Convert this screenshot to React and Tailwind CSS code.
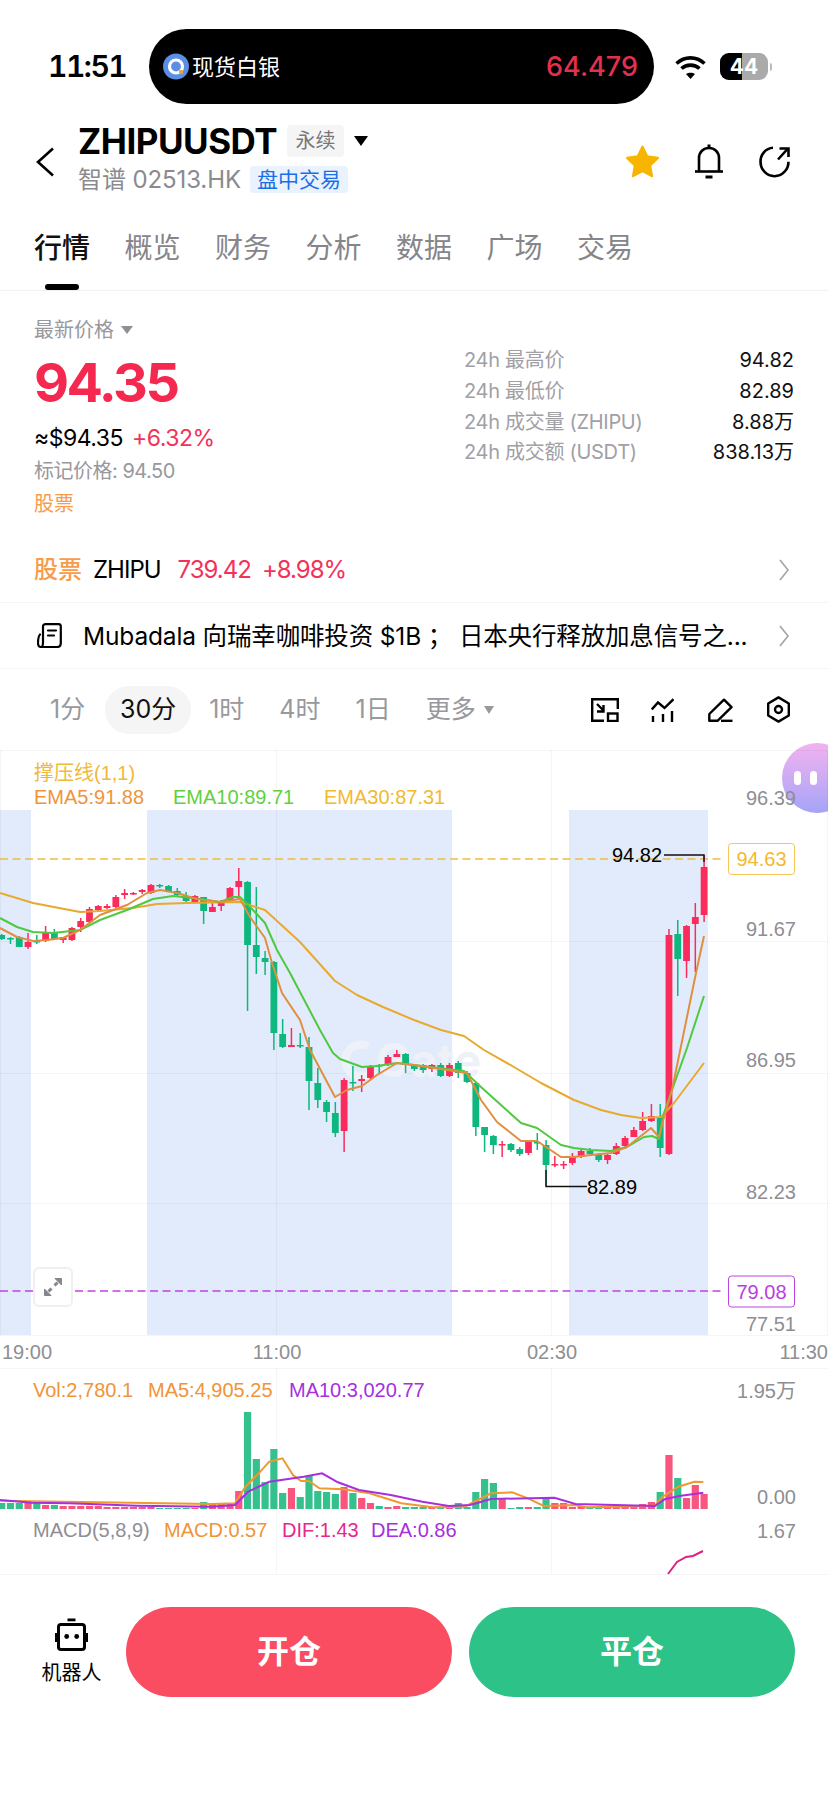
import React from 'react';

const UP = '#fb2c5b';
const DOWN = '#0db77e';
const UP_BAR = '#f9567f';
const DOWN_BAR = '#35c18e';

// [dir, high, bodyTop, bodyBottom, low]
const candles = [
  [0, 934, 935, 939, 940], [0, 937, 938, 939, 944], [0, 936, 937, 947, 947], [1, 933, 942, 947, 949],
  [0, 935, 941, 942, 944], [1, 926, 933, 941, 942], [0, 929, 932, 939, 940], [1, 937, 937, 940, 943],
  [1, 927, 928, 940, 941], [1, 918, 921, 927, 932], [1, 907, 909, 922, 923], [1, 905, 906, 910, 912],
  [1, 904, 906, 908, 909], [1, 895, 897, 907, 908], [1, 889, 893, 895, 899], [1, 892, 893, 894, 895],
  [1, 889, 890, 892, 894], [1, 884, 885, 893, 894], [0, 884, 885, 886, 888], [0, 885, 886, 891, 891],
  [0, 888, 891, 895, 897], [0, 892, 896, 901, 902], [1, 895, 896, 902, 903], [0, 897, 897, 911, 924],
  [1, 903, 907, 912, 912], [1, 900, 901, 906, 911], [1, 887, 888, 900, 901], [1, 868, 881, 887, 900],
  [0, 881, 882, 945, 1011], [0, 887, 945, 957, 974], [0, 951, 958, 962, 975], [0, 961, 962, 1033, 1050],
  [0, 1019, 1034, 1047, 1048], [1, 1028, 1045, 1047, 1047], [0, 1033, 1045, 1046, 1048], [0, 1037, 1047, 1081, 1110],
  [0, 1068, 1083, 1100, 1108], [0, 1100, 1102, 1112, 1122], [0, 1102, 1113, 1133, 1137], [1, 1078, 1080, 1131, 1152],
  [0, 1066, 1082, 1083, 1091], [1, 1075, 1079, 1081, 1092], [1, 1065, 1066, 1078, 1080], [0, 1064, 1065, 1066, 1073],
  [1, 1055, 1057, 1065, 1066], [1, 1050, 1054, 1057, 1057], [0, 1053, 1054, 1065, 1073], [0, 1064, 1065, 1069, 1071],
  [0, 1064, 1065, 1070, 1073], [1, 1064, 1065, 1069, 1072], [0, 1063, 1065, 1076, 1077], [1, 1063, 1065, 1076, 1077],
  [0, 1061, 1063, 1073, 1078], [0, 1071, 1073, 1082, 1083], [0, 1082, 1083, 1127, 1136], [0, 1127, 1127, 1135, 1152],
  [0, 1135, 1136, 1145, 1154], [1, 1141, 1144, 1145, 1157], [0, 1143, 1144, 1150, 1152], [0, 1147, 1149, 1154, 1156],
  [1, 1140, 1141, 1153, 1155], [0, 1133, 1142, 1143, 1150], [0, 1140, 1145, 1165, 1186], [1, 1156, 1164, 1165, 1167],
  [1, 1161, 1164, 1165, 1169], [1, 1153, 1157, 1163, 1165], [1, 1148, 1151, 1157, 1158], [0, 1148, 1151, 1154, 1156],
  [0, 1153, 1155, 1160, 1162], [1, 1154, 1155, 1160, 1164], [1, 1143, 1146, 1154, 1155], [1, 1136, 1138, 1146, 1147],
  [1, 1127, 1130, 1137, 1137], [1, 1112, 1121, 1130, 1131], [1, 1104, 1116, 1121, 1122], [0, 1104, 1117, 1148, 1157],
  [1, 929, 935, 1154, 1155], [0, 920, 934, 959, 996], [1, 925, 926, 961, 978], [1, 903, 917, 924, 972],
  [1, 855, 867, 915, 922],
];

const volumes = [
  6, 6, 6, 6, 6, 4, 4, 3, 3, 3, 3, 3, 2, 2, 2, 2, 2, 2, 1, 1, 1, 1, 1, 7, 6, 5, 5, 18, 97, 50, 27, 60, 16, 21, 12, 33,
  18, 17, 15, 22, 16, 11, 6, 3, 2, 3, 2, 2, 2, 2, 2, 2, 6, 2, 17, 30, 26, 10, 1, 2, 2, 2, 10, 6, 6, 2, 3, 2, 2, 2, 2,
  3, 3, 5, 7, 17, 54, 31, 11, 24, 15,
];

const ema30 = '0,893 33,903 80,912 100,911 133,908 157,904 187,903 240,902 265,910 300,942 335,981 357,995 383,1007 414,1020 441,1030 464,1036 484,1050 514,1067 541,1083 574,1100 601,1110 621,1115 641,1118 661,1117 674,1103 704,1063';
const ema10 = '0,918 17,927 33,932 53,933 80,930 100,920 127,910 153,899 173,896 193,898 220,902 233,897 240,897 253,910 265,923 277,950 290,973 300,992 320,1030 333,1053 340,1059 362,1067 377,1066 397,1063 414,1065 464,1071 481,1087 501,1105 521,1123 537,1128 561,1145 574,1148 591,1150 611,1151 627,1147 644,1137 652,1136 659,1139 664,1113 672,1090 687,1048 704,996';
const ema5 = '0,928 17,937 33,941 47,940 63,938 80,930 100,915 127,905 147,893 160,890 177,893 197,899 220,902 240,899 250,917 265,938 272,963 282,993 300,1020 310,1050 335,1097 347,1090 362,1086 377,1075 397,1063 414,1065 467,1073 481,1100 497,1122 521,1141 537,1141 561,1157 574,1157 591,1155 611,1153 627,1147 651,1128 659,1137 664,1117 672,1090 696,973 704,936';

const volMa5 = [[0, 452], [400, 462], [445, 460], [465, 410], [490, 370], [510, 335], [535, 325], [555, 375], [570, 393], [585, 393], [605, 415], [650, 418], [700, 430], [760, 460], [820, 472], [880, 470], [930, 430], [970, 427], [1000, 445], [1030, 468], [1090, 465], [1110, 472], [1240, 468], [1255, 440], [1285, 410], [1315, 395], [1332, 396]];
const volMa10 = [[0, 450], [60, 458], [130, 460], [260, 467], [400, 470], [445, 465], [470, 425], [510, 395], [575, 380], [610, 370], [640, 397], [680, 420], [740, 435], [800, 455], [850, 468], [890, 465], [930, 447], [1050, 443], [1090, 462], [1240, 468], [1260, 447], [1290, 437], [1332, 428]];

const volPts = (pts) => pts.map(([x, y]) => `${(x / 1.894).toFixed(1)},${(1350 + y / 3).toFixed(1)}`).join(' ');
const candleX = (i) => 1.7 + i * 8.78;

const stats = [
  ['24h 最高价', '94.82'],
  ['24h 最低价', '82.89'],
  ['24h 成交量 (ZHIPU)', '8.88万'],
  ['24h 成交额 (USDT)', '838.13万'],
];

const tabs = ['行情', '概览', '财务', '分析', '数据', '广场', '交易'];

const Chevron = () => (
  <svg width="12" height="24" viewBox="0 0 12 24" fill="none" stroke="#a3a3a8" strokeWidth="1.6">
    <path d="M2 2l8 10-8 10" />
  </svg>
);

const AxisText = ({ x, y, children, fill = '#8e8e93', anchor = 'end', size = 20 }) => (
  <text x={x} y={y + size * 0.36} fill={fill} fontSize={size} textAnchor={anchor}>
    {children}
  </text>
);

const Chart = () => (
  <svg width="828" height="825" viewBox="0 750 828 825" className="relative z-10 block" fontFamily='"Liberation Sans", "Noto Sans CJK SC", sans-serif'>
    {/* session bands */}
    <rect x="0" y="810" width="31" height="525" fill="#e2ebfb" />
    <rect x="147" y="810" width="305" height="525" fill="#e2ebfb" />
    <rect x="569" y="810" width="139" height="525" fill="#e2ebfb" />

    {/* grid */}
    <g stroke="#000" strokeOpacity="0.04" strokeWidth="1">
      <path d="M0 750.5H828M0 941.5H828M0 1073.5H828M0 1203.5H828M0 1335.5H828M0 1368.5H828M0 1574.5H828" />
      <path d="M276.5 750V1335M551.5 750V1335M276.5 1368V1574M551.5 1368V1574M0.5 750V1335M827.5 750V1335" />
    </g>

    {/* watermark */}
    <path d="M368 1046a16 16 0 1 0 6 24" fill="none" stroke="#eef1f8" strokeWidth="8" />
    <text x="376" y="1077" fontSize="46" fontWeight="700" fill="#eef1f8" fontFamily="Inter, sans-serif">Gate</text>

    {/* legends */}
    <AxisText x={34} y={773} fill="#f0b93a" anchor="start">撑压线(1,1)</AxisText>
    <AxisText x={34} y={797} fill="#f0943a" anchor="start">EMA5:91.88</AxisText>
    <AxisText x={173} y={797} fill="#5fd13e" anchor="start">EMA10:89.71</AxisText>
    <AxisText x={324} y={797} fill="#f2b92c" anchor="start">EMA30:87.31</AxisText>

    {/* price guides */}
    <line x1="0" x2="725" y1="859" y2="859" stroke="#f0bc3f" strokeWidth="1.4" strokeDasharray="8 4.5" />
    <line x1="0" x2="725" y1="1291" y2="1291" stroke="#c040e8" strokeWidth="1.4" strokeDasharray="8 4.5" />

    {/* candles */}
    {candles.map(([dir, high, top, bottom, low], i) => {
      const x = candleX(i);
      const color = dir ? UP : DOWN;
      return (
        <g key={i} fill={color}>
          <rect x={x - 0.75} y={high} width="1.5" height={low - high} />
          <rect x={x - 3.4} y={top} width="6.8" height={Math.max(bottom - top, 1.5)} />
        </g>
      );
    })}

    <polyline points={ema30} fill="none" stroke="#e8a92e" strokeWidth="2" strokeLinejoin="round" />
    <polyline points={ema10} fill="none" stroke="#4fc93f" strokeWidth="2" strokeLinejoin="round" />
    <polyline points={ema5} fill="none" stroke="#e08f3f" strokeWidth="2" strokeLinejoin="round" />

    {/* high / low markers */}
    <path d="M664 855H704V862" fill="none" stroke="#111" strokeWidth="1.4" />
    <path d="M546 1170V1186.5H587" fill="none" stroke="#111" strokeWidth="1.4" />
    <AxisText x={612} y={855} fill="#000" anchor="start">94.82</AxisText>
    <AxisText x={587} y={1187} fill="#000" anchor="start">82.89</AxisText>

    {/* y axis */}
    <AxisText x={796} y={798}>96.39</AxisText>
    <AxisText x={796} y={929}>91.67</AxisText>
    <AxisText x={796} y={1060}>86.95</AxisText>
    <AxisText x={796} y={1192}>82.23</AxisText>
    <AxisText x={796} y={1324}>77.51</AxisText>

    <rect x="728.5" y="843.5" width="66" height="31" rx="3" fill="#fff" stroke="#f5c558" />
    <AxisText x={761.5} y={859} fill="#f4b92e" anchor="middle">94.63</AxisText>
    <rect x="728.5" y="1276" width="66" height="31" rx="3" fill="#fff" stroke="#bd45e4" />
    <AxisText x={761.5} y={1291.5} fill="#b93ee0" anchor="middle">79.08</AxisText>

    {/* x axis */}
    <AxisText x={2} y={1352} anchor="start">19:00</AxisText>
    <AxisText x={277} y={1352} anchor="middle">11:00</AxisText>
    <AxisText x={552} y={1352} anchor="middle">02:30</AxisText>
    <AxisText x={828} y={1352}>11:30</AxisText>

    {/* volume */}
    <AxisText x={33} y={1390} fill="#f0943a" anchor="start">Vol:2,780.1</AxisText>
    <AxisText x={148} y={1390} fill="#f0943a" anchor="start">MA5:4,905.25</AxisText>
    <AxisText x={289} y={1390} fill="#a62fe0" anchor="start">MA10:3,020.77</AxisText>
    <AxisText x={796} y={1391}>1.95万</AxisText>
    <AxisText x={796} y={1497}>0.00</AxisText>
    {volumes.map((h, i) => (
      <rect key={i} x={candleX(i) - 3.6} y={1509 - h} width="7.2" height={h} fill={candles[i][0] ? UP_BAR : DOWN_BAR} />
    ))}
    <polyline points={volPts(volMa5)} fill="none" stroke="#ee9a2e" strokeWidth="2" />
    <polyline points={volPts(volMa10)} fill="none" stroke="#a62fe0" strokeWidth="2" />

    {/* macd */}
    <AxisText x={33} y={1530} anchor="start">MACD(5,8,9)</AxisText>
    <AxisText x={164} y={1530} fill="#f0943a" anchor="start">MACD:0.57</AxisText>
    <AxisText x={282} y={1530} fill="#e8268f" anchor="start">DIF:1.43</AxisText>
    <AxisText x={371} y={1530} fill="#a62fe0" anchor="start">DEA:0.86</AxisText>
    <AxisText x={796} y={1531}>1.67</AxisText>
    <polyline points="668,1574 677,1562 686,1557 693,1556 703,1551" fill="none" stroke="#e01f83" strokeWidth="2" />
  </svg>
);

const Wifi = () => (
  <svg width="31" height="24" viewBox="0 0 31 24" fill="none" stroke="#000" strokeWidth="3.6">
    <path d="M1.500 8.500c8-7.500 20-7.500 28 0" />
    <path d="M6.500 13.500c5-4.500 13-4.500 18 0" />
    <path d="M15.500 24l-4.500-5c2.600-1.800 6.400-1.800 9 0z" fill="#000" stroke="none" />
  </svg>
);

const Battery = () => (
  <div className="relative flex h-[27px] w-[48px] items-center justify-center overflow-hidden rounded-[9px] bg-[#aaaaaa]">
    <div className="absolute inset-y-0 left-0 w-[22px] bg-black" />
    <span className="relative text-[21px] font-bold leading-none text-white">44</span>
  </div>
);

export default function App() {
  return (
    <div className="relative min-h-[1801px] w-[828px] overflow-hidden bg-white font-['Inter','Noto_Sans_CJK_SC',sans-serif] text-black">
      {/* status bar */}
      <div className="flex h-[104px] items-start pt-[29px]">
        <div className="flex h-[75px] w-[149px] items-center pl-[48px] text-[30px] font-semibold tabular-nums tracking-[-1.5px]">11:51</div>
        <div className="flex h-[75px] w-[505px] items-center justify-between rounded-[38px] bg-black pl-[14px] pr-[16px]">
          <div className="flex items-center gap-[3px]">
            <svg width="26" height="27" viewBox="0 0 26 27">
              <circle cx="13" cy="13.5" r="13" fill="#5b8fe6" />
              <circle cx="13" cy="13.5" r="6.5" fill="none" stroke="#fff" strokeWidth="3.2" />
              <circle cx="18" cy="19" r="2.2" fill="#e9a13b" />
            </svg>
            <span className="text-[22px] leading-none text-white">现货白银</span>
          </div>
          <span className="text-[27px] font-medium leading-none text-[#e2304f]">64.479</span>
        </div>
        <div className="ml-[21px] flex h-[75px] items-center"><Wifi /></div>
        <div className="ml-[14px] flex h-[75px] items-center">
          <Battery />
          <div className="ml-[2px] h-[8px] w-[2px] rounded-r bg-[#bbbbbb]" />
        </div>
      </div>

      {/* title */}
      <div className="flex h-[96px] items-start">
        <svg width="18" height="30" viewBox="0 0 18 30" fill="none" stroke="#000" strokeWidth="2.6" className="ml-[36px] mt-[43px]">
          <path d="M17 1.5L2 15l15 13.5" />
        </svg>
        <div className="ml-[24px] flex flex-col pt-[19px]">
          <div className="flex h-[36px] items-center">
            <span className="text-[35px] font-bold leading-none tracking-[-0.5px]">ZHIPUUSDT</span>
            <span className="ml-[10px] flex h-[32px] w-[57px] items-center justify-center rounded-[4px] bg-[#f5f5f5] text-[20px] text-[#77777c]">永续</span>
            <span className="ml-[10px] h-0 w-0 border-x-[7px] border-t-[10px] border-x-transparent border-t-black" />
          </div>
          <div className="mt-[7px] flex h-[27px] items-center">
            <span className="text-[24px] leading-none tracking-[-0.1px] text-[#8a8a8f]">智谱 02513.HK</span>
            <span className="ml-[9px] flex h-[27px] w-[98px] items-center justify-center rounded-[4px] bg-[#eaf3fd] text-[21px] text-[#1a6fe8]">盘中交易</span>
          </div>
        </div>
        <div className="ml-auto flex items-center pr-[37px] pt-[40px]">
          <svg width="37" height="35" viewBox="0 0 24 23" fill="#f7b500" stroke="#f7b500" strokeWidth="1.5" strokeLinejoin="round">
            <path d="M12 1.800l3.100 6.400 7 1-5.100 4.900 1.200 7-6.200-3.400-6.200 3.400 1.200-7L1.900 9.200l7-1z" />
          </svg>
          <svg width="30" height="35" viewBox="0 0 30 35" fill="none" stroke="#000" strokeWidth="2.6" className="ml-[33px]">
            <path d="M15 0.500v3.500" strokeWidth="3" />
            <path d="M5 27V14c0-6 4.500-10 10-10s10 4 10 10v13" />
            <path d="M1 27.500h28" />
            <path d="M11.500 33h7" strokeWidth="3" />
          </svg>
          <svg width="32" height="32" viewBox="0 0 32 32" fill="none" stroke="#000" strokeWidth="2.600" className="ml-[35px]">
            <path d="M14 1.800C6.800 2.300 1.500 8.300 1.500 15.700c0 8 6.300 14.500 14 14.500s14-6.500 14-14.500" />
            <path d="M19 13.500L28.500 3" />
            <path d="M20.500 2.500h9v8.500" />
          </svg>
        </div>
      </div>

      {/* tabs */}
      <div className="flex h-[91px] gap-[34.500px] border-b border-[#f2f2f2] pl-[34px] pt-[28px]">
        {tabs.map((t, i) => (
          <div key={t} className="flex flex-col items-center">
            <span className={i === 0 ? 'text-[28px] font-medium leading-[40px] text-[#111]' : 'text-[28px] leading-[40px] text-[#85858a]'}>{t}</span>
            {i === 0 && <span className="mt-[16px] h-[6px] w-[34px] rounded-full bg-black" />}
          </div>
        ))}
      </div>

      {/* price */}
      <div className="flex h-[247px] justify-between px-[34px]">
        <div className="flex flex-col pt-[25px]">
          <div className="flex h-[28px] items-center gap-[7px] text-[20px] text-[#98989d]">
            最新价格
            <span className="h-0 w-0 border-x-[6px] border-t-[8px] border-x-transparent border-t-[#8e8e93]" />
          </div>
          <div className="mt-[9px] h-[60px] text-[54px] font-bold leading-[60px] tracking-[-2.5px] text-[#f5294f]">94.35</div>
          <div className="mt-[10px] flex h-[30px] items-center gap-[9px] text-[23px] tracking-[-0.5px]">
            <span>≈$94.35</span>
            <span className="text-[#f3315a]">+6.32%</span>
          </div>
          <div className="mt-[4px] h-[28px] text-[20px] leading-[28px] tracking-[-0.5px] text-[#98989d]">标记价格: 94.50</div>
          <div className="mt-[5px] h-[28px] text-[20px] leading-[28px] text-[#f89b4b]">股票</div>
        </div>
        <div className="flex w-[330px] flex-col pt-[54px]">
          {stats.map(([label, value]) => (
            <div key={label} className="flex h-[30.700px] items-center justify-between text-[20px]">
              <span className="tracking-[-0.3px] text-[#a0a0a5]">{label}</span>
              <span className="text-[#111]">{value}</span>
            </div>
          ))}
        </div>
      </div>

      {/* stock row */}
      <div className="flex h-[65px] items-center border-b border-[#f5f5f5] pl-[34px] pr-[38px] text-[24px] tracking-[-1px]">
        <span className="font-medium tracking-normal text-[#f89b4b]">股票</span>
        <span className="ml-[11px]">ZHIPU</span>
        <span className="ml-[17px] text-[#f3315a]">739.42</span>
        <span className="ml-[11px] text-[#f3315a]">+8.98%</span>
        <div className="ml-auto"><Chevron /></div>
      </div>

      {/* news row */}
      <div className="flex h-[66px] items-center border-b border-[#f5f5f5] pl-[37px] pr-[38px]">
        <svg width="25" height="25" viewBox="0 0 25 25" fill="none" stroke="#000" strokeWidth="2.200" strokeLinecap="round" strokeLinejoin="round">
          <path d="M3 11.500C1.500 13 1 17 1 20c0 2.500 1.500 4 3 4s2-2 2-5V3.500C6 2 7 1.200 8.500 1.200H21.500c1.500 0 2.300 1 2.300 2.300V20c0 2.500-1.500 4-3.800 4H4" />
          <path d="M11 7.500H19M11 12.500H17" />
        </svg>
        <span className="ml-[21px] w-[670px] truncate text-[24.5px] leading-[30px] tracking-[-0.15px]">Mubadala 向瑞幸咖啡投资 $1B ； 日本央行释放加息信号之...</span>
        <div className="ml-auto"><Chevron /></div>
      </div>

      {/* interval row */}
      <div className="flex h-[81px] items-center pl-[50px] text-[25px] text-[#98989d]">
        <span>1分</span>
        <span className="ml-[20px] flex h-[48px] w-[86px] items-center justify-center rounded-[24px] bg-[#f5f5f5] text-[#111]">30分</span>
        <span className="ml-[18px]">1时</span>
        <span className="ml-[35px]">4时</span>
        <span className="ml-[35px]">1日</span>
        <span className="ml-[35px]">更多</span>
        <span className="ml-[8px] h-0 w-0 border-x-[5px] border-t-[8px] border-x-transparent border-t-[#98989d]" />
        <div className="ml-auto flex items-center pr-[38px]">
          <svg width="28" height="24" viewBox="0 0 28 24" fill="none" stroke="#000" strokeWidth="2.400">
            <path d="M13 22.800H1.200V1.200H26.800V11" />
            <path d="M6 6l6.500 6.500M12.500 7v6.500H6" />
            <rect x="17" y="15.500" width="9.500" height="7.500" />
          </svg>
          <svg width="23" height="24" viewBox="0 0 23 24" fill="none" stroke="#000" strokeWidth="2.400" className="ml-[32px]">
            <path d="M0.800 11.500L7 4.500l6.500 5.500L22.500 1.200" />
            <path d="M2 18v6M12 16v8M21 13v11" />
          </svg>
          <svg width="25" height="24" viewBox="0 0 25 24" fill="none" stroke="#000" strokeWidth="2.400" strokeLinejoin="round" className="ml-[34px]">
            <path d="M16 1.700l7.500 7.500L9.500 22.800H1.300V16z" />
            <path d="M13 22.800h11.500" />
          </svg>
          <svg width="23" height="27" viewBox="0 0 23 27" fill="none" stroke="#000" strokeWidth="2.400" strokeLinejoin="round" className="ml-[34px]">
            <path d="M11.500 1.400L21.800 7.500v12L11.500 25.600 1.200 19.500v-12z" />
            <circle cx="11.500" cy="13.500" r="3.500" />
          </svg>
        </div>
      </div>

      {/* chart */}
      <div className="relative">
        <div className="absolute left-[782px] top-[-7px] z-0 flex h-[70px] w-[70px] items-center gap-[9px] rounded-full bg-gradient-to-b from-[#f2b2ef] to-[#a5a3f8] pl-[12px]">
          <span className="h-[14px] w-[7px] rounded-full bg-white" />
          <span className="h-[14px] w-[7px] rounded-full bg-white" />
        </div>
        <Chart />
        <div className="absolute left-[33px] top-[517px] z-20 flex h-[40px] w-[40px] items-center justify-center rounded-[6px] border-2 border-[#f0f0f0] bg-white">
          <svg width="20" height="20" viewBox="0 0 20 20" fill="#85858c" stroke="#85858c" strokeWidth="1">
            <path d="M12 1.500h6.500V8z" />
            <path d="M8 18.500H1.500V12z" />
            <path d="M14.500 5.500l-3 3M5.500 14.500l3-3" strokeWidth="3" />
          </svg>
        </div>
      </div>

      {/* bottom bar */}
      <div className="flex pt-[32px]">
        <div className="ml-[33px] mr-[16px] flex w-[77px] flex-col items-center pt-[11px]">
          <svg width="35" height="35" viewBox="0 0 35 35" fill="none">
            <rect x="13.500" y="0.500" width="8" height="2.800" fill="#000" />
            <rect x="4.500" y="6.500" width="26" height="25" rx="2.500" stroke="#000" strokeWidth="3" />
            <rect x="1" y="15" width="2.500" height="9" fill="#000" />
            <rect x="31.500" y="15" width="2.500" height="9" fill="#000" />
            <circle cx="12.700" cy="18.500" r="2.400" fill="#000" />
            <circle cx="22.700" cy="18.500" r="2.400" fill="#000" />
          </svg>
          <span className="mt-[6px] text-[20px] leading-[28px]">机器人</span>
        </div>
        <div className="flex h-[90px] w-[326px] items-center justify-center rounded-[45px] bg-[#fa4d62] text-[32px] font-bold text-white">开仓</div>
        <div className="ml-[17px] flex h-[90px] w-[326px] items-center justify-center rounded-[45px] bg-[#2dc287] text-[32px] font-bold text-white">平仓</div>
      </div>
    </div>
  );
}
